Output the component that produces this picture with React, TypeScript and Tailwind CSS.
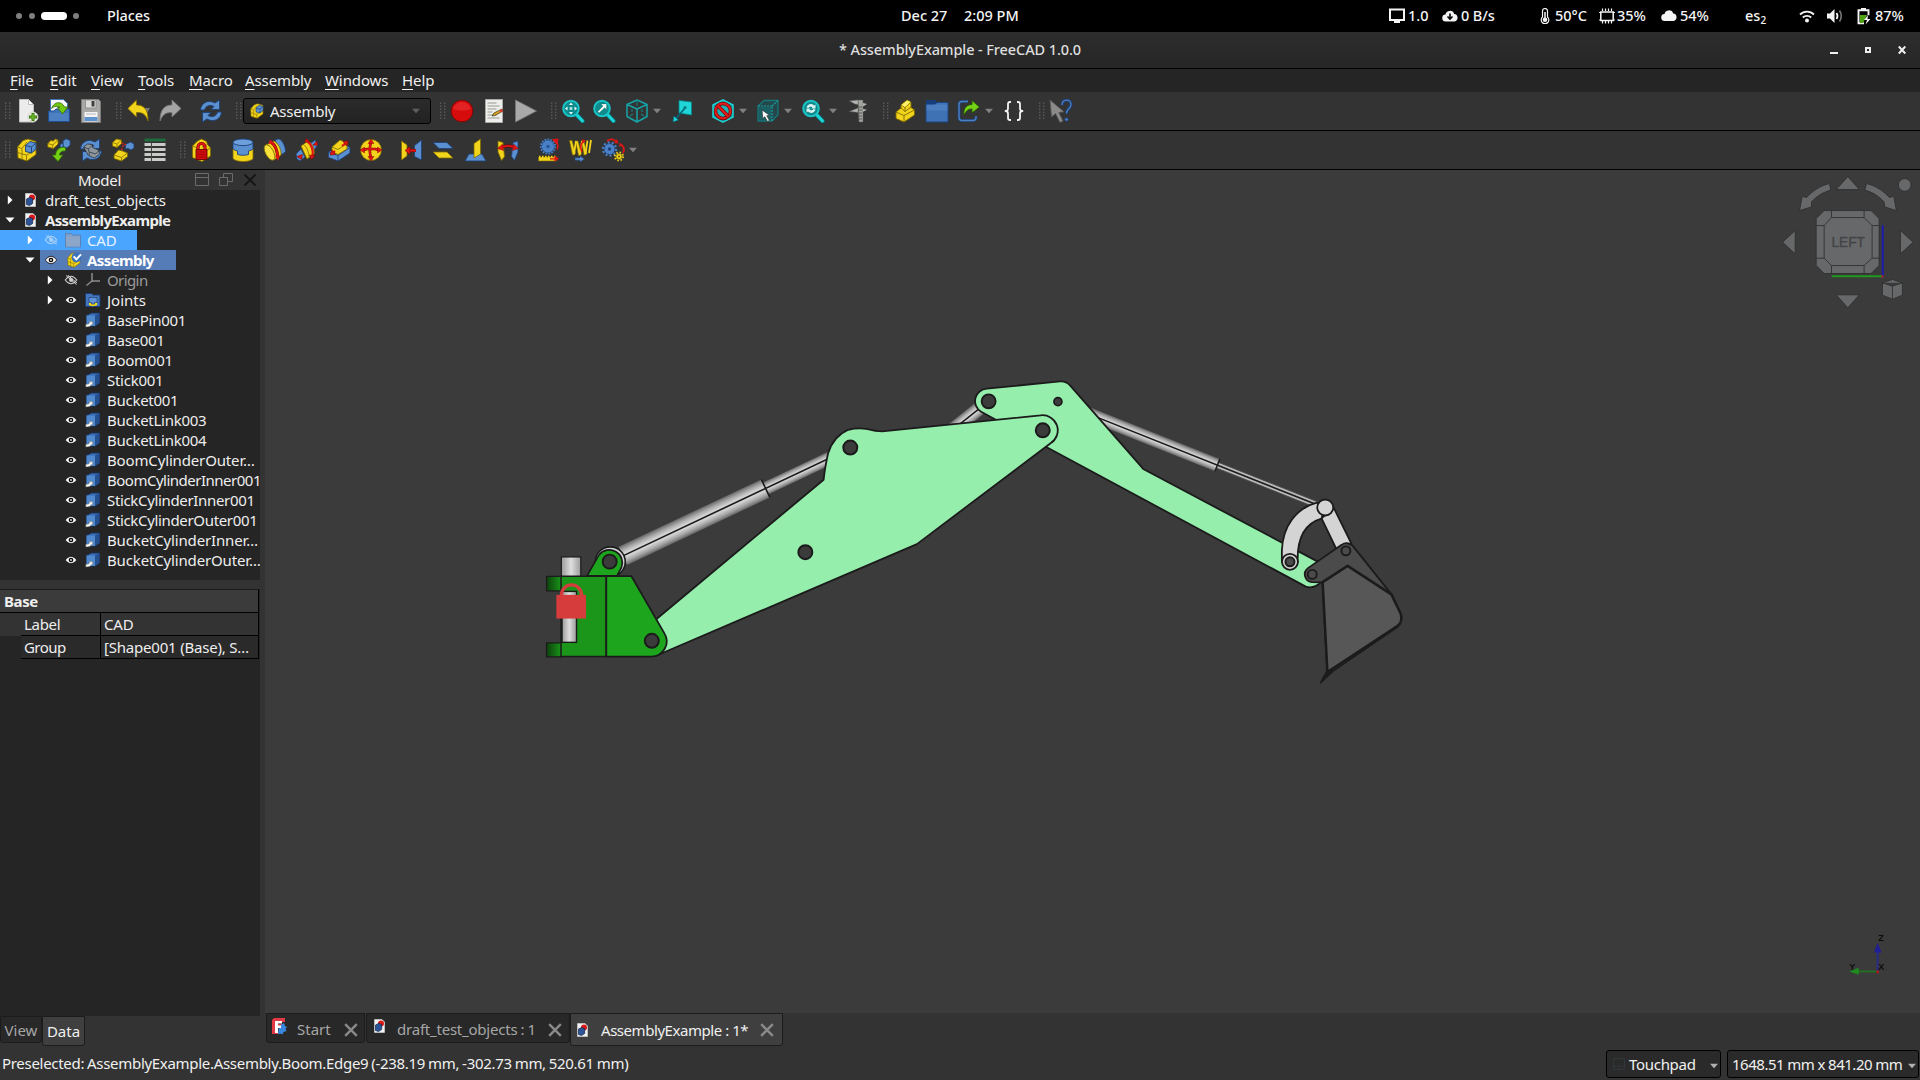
import React from "react";

type P = { className?: string };

/* ---------- generic pieces ---------- */

const Ic = ({ children, className = "" }: { children: React.ReactNode; className?: string }) => (
  <svg viewBox="0 0 24 24" className={`w-6 h-6 shrink-0 ${className}`} fill="none" strokeLinejoin="round">
    {children}
  </svg>
);

const Handle = ({ className = "" }: P) => (
  <svg viewBox="0 0 6 18" className={`w-[6px] h-[18px] shrink-0 ${className}`}>
    {[0, 3, 6, 9, 12, 15].map((y) => (
      <g key={y} fill="#5c5c5c">
        <rect x="0" y={y + 0.5} width="1.4" height="1.4" />
        <rect x="4" y={y + 0.5} width="1.4" height="1.4" />
      </g>
    ))}
  </svg>
);

const Arrow = ({ className = "", fill = "#808080" }: P & { fill?: string }) => (
  <svg viewBox="0 0 8 6" className={`w-2 h-1.5 shrink-0 ${className}`}>
    <path d="M0 .8h8L4 5.2z" fill={fill} />
  </svg>
);

const Y = "#f3d41c";
const YD = "#7d6a00";
const B = "#5a8fd0";
const BD = "#1c3f77";
const C = "#1fd5d8";
const R = "#d01010";

/* ---------- first toolbar icons ---------- */

const NewDoc = ({ className }: P) => (
  <Ic className={className}>
    <path d="M3.500.5h9l5 5v17.500h-14z" fill="#ececec" stroke="#bdbdbd" />
    <path d="M12.500.5l5 5h-5z" fill="#fff" stroke="#bdbdbd" />
    <circle cx="17" cy="18" r="5" fill="#eef5e8" stroke="#c8ccc4" strokeWidth=".8" />
    <path d="M17 14v8M13 18h8" stroke="#3a7a0c" strokeWidth="3" />
    <path d="M17 15v6M14 18h6" stroke="#73c12e" strokeWidth="1.200" />
  </Ic>
);
const OpenDoc = ({ className }: P) => (
  <Ic className={className}>
    <path d="M3.500.5h13l4 4V16h-17z" fill="#f4f4f4" stroke="#3f74b8" />
    <path d="M1.500 12H7l2-2h13.500v12.500h-21z" fill="#3f74b8" stroke="#1f4f90" />
    <path d="M2.500 14h19v8h-19z" fill="#5a8ccc" opacity=".5" />
    <path d="M4.500 9.500C7 2.500 14.500 1.500 17.500 8h3.500L15.500 15l-5-6.500H13c-2-2-6-1.500-8.500 1z" fill="#73c80f" stroke="#2f6a05" strokeWidth=".8" />
  </Ic>
);
const Save = ({ className }: P) => (
  <Ic className={className}>
    <path d="M2.500.5h17l2 2v21h-19z" fill="#a9aaa7" stroke="#7c7d7a" />
    <path d="M6.500 1h10.500v8H6.500z" fill="#dcdcda" stroke="#80817e" strokeWidth=".7" />
    <path d="M12.500 2h3v5.500h-3z" fill="#3f403e" />
    <path d="M5.500 13h13v9.500h-13z" fill="#f3f3f3" />
    <path d="M5.500 18h13v4h-13z" fill="#5f92cf" />
    <path d="M7 15h10" stroke="#bbb" />
  </Ic>
);
const Undo = ({ className }: P) => (
  <Ic className={className}>
    <path d="M15 9h8l-3.500 6z" fill="#7b7b7b" />
    <path d="M9.500 1v5c7 0 12 4 11.500 16-2.500-7-5-8.500-11.500-8.500V18L.8 9.500z" fill={Y} stroke={YD} strokeWidth=".8" />
  </Ic>
);
const Redo = ({ className }: P) => (
  <Ic className={className}>
    <path d="M14 1v5C7 6 2 10 2 22c3-7 5.500-8.500 12-8.500V18l9-8.500z" fill="#a4a4a4" stroke="#777" strokeWidth=".8" />
  </Ic>
);
const RefreshShape = () => (
  <>
    <path d="M1.500 11C2 4 9 0 16 4l4.500-3v9.500H12L15 7.500C10.500 5 6.500 7 5.500 11z" fill={B} stroke={BD} strokeWidth=".9" />
    <path d="M22.500 13C22 20 15 24 8 20l-4.500 3v-9.500H12L9 16.500c4.500 2.500 8.500.5 9.500-3.500z" fill={B} stroke={BD} strokeWidth=".9" />
  </>
);
const Refresh = ({ className }: P) => (
  <Ic className={className}>
    <RefreshShape />
  </Ic>
);
const AssemblyShape = () => (
  <>
    <path d="M2.500 9l5.500-6.500 5-1.500 8 2.500v13L12 23l-9-3z" fill={Y} stroke={YD} strokeWidth=".9" />
    <path d="M2.500 9l4.500 1.500v11M7 10.500L12 4M7 16l4.500 1 9.500-5M11.500 17v6M3 14.500l4 1.500" stroke={YD} strokeWidth=".8" />
    <path d="M10.500 7.500L15 3.500l6 1.500v6l-4.500 4-6-1.500z" fill={B} stroke={BD} strokeWidth=".9" />
    <path d="M10.500 7.500l6 1.500 4.500-4M16.500 9v6" stroke={BD} strokeWidth=".9" />
  </>
);
const AssemblyIc = ({ className }: P) => (
  <Ic className={className}>
    <AssemblyShape />
  </Ic>
);
const Record = ({ className }: P) => (
  <Ic className={className}>
    <circle cx="12" cy="12" r="10.800" fill="#d60c0c" stroke="#7e0000" strokeWidth=".8" />
    <path d="M3 10a9.300 9.300 0 0 1 18 0c-5 2-12 2-18 0z" fill="#f03a3a" opacity=".5" />
  </Ic>
);
const MacroEdit = ({ className }: P) => (
  <Ic className={className}>
    <path d="M3.500.5h17v23h-17z" fill="#eeeeea" stroke="#a8a8a8" />
    <path d="M5.500 4h9M5.500 7h12M5.500 10h9M5.500 13h5M5.500 16h9M5.500 19h12" stroke="#999" />
    <path d="M10 17l2-3 8-4 1 2-8 4.500z" fill="#e0a01c" stroke="#442" strokeWidth=".8" />
    <path d="M17.500 11.300l2.500-1.300 1 2-2.500 1.400z" fill="#d33" />
  </Ic>
);
const Play = ({ className }: P) => (
  <Ic className={className}>
    <path d="M1.500 1l21 11-21 11z" fill="#a9a9a9" stroke="#777" strokeWidth=".8" />
  </Ic>
);
const LensBase = () => (
  <>
    <path d="M15 15l6.500 7" stroke="#067a7c" strokeWidth="4.400" strokeLinecap="round" />
    <path d="M15 15l6.500 7" stroke={C} strokeWidth="2.800" strokeLinecap="round" />
    <circle cx="10" cy="9.500" r="7.800" fill="#0f8a8d" stroke="#19c3c6" strokeWidth="2" />
  </>
);
const ZoomFit = ({ className }: P) => (
  <Ic className={className}>
    <LensBase />
    <path d="M10 3.500l2 2.500H8zM10 15.500l2-2.500H8zM4 9.500l2.500-2v4zM16 9.500l-2.500-2v4z" fill="#e8fbfb" />
    <path d="M8.700 8.200h2.600v2.600H8.700z" fill="#bfeaea" />
  </Ic>
);
const ZoomSel = ({ className }: P) => (
  <Ic className={className}>
    <LensBase />
    <path d="M14.500 5v5.500l-1.800-1.800L7 14l-1.300-1.300L11 7 9 5z" fill="#fff" stroke="#064" strokeWidth=".3" />
  </Ic>
);
const IsoCube = ({ className }: P) => (
  <Ic className={className}>
    <path d="M12 1l10 4.500v12L12 23 2 17.500v-12zM2 5.500l10 4.500 10-4.500M12 10v13" stroke="#16a3a6" strokeWidth="1.500" />
    <path d="M12 1v6M5 17l3-2M19 17l-3-2M7 10v3M17 10v3" stroke="#138082" strokeWidth="1.100" />
  </Ic>
);
const AlignSel = ({ className }: P) => (
  <Ic className={className}>
    <path d="M8 1.500l12.500 1.500v13L8 14z" fill={C} stroke="#088" strokeWidth=".8" />
    <path d="M14 9L4.500 20" stroke="#067" strokeWidth="1.800" />
    <path d="M2 23l.8-6 4.700 4z" fill={C} stroke="#067" strokeWidth=".6" />
    <circle cx="14" cy="8.500" r="1.600" fill="#0b7f82" />
  </Ic>
);
const DrawStyle = ({ className }: P) => (
  <Ic className={className}>
    <path d="M12 .8l10 5v12.400l-10 5-10-5V5.800z" fill="#149a9c" stroke={C} strokeWidth="1.500" />
    <circle cx="12" cy="12" r="7.500" fill="#1fb0b2" stroke="#700" strokeWidth="3.400" />
    <circle cx="12" cy="12" r="7.500" stroke="#e51c1c" strokeWidth="2" />
    <path d="M6.800 6.800l10.400 10.400" stroke="#700" strokeWidth="3.400" />
    <path d="M6.800 6.800l10.400 10.400" stroke="#e51c1c" strokeWidth="2.200" />
  </Ic>
);
const BoxSelect = ({ className }: P) => (
  <Ic className={className}>
    <path d="M2 7l6-5.500h14v14L16 22H2z" fill="#23474a" stroke="#15777a" strokeWidth="1.300" />
    <path d="M3 8h12v13H3z" fill="#1a5f61" />
    <path d="M2 7h14v15M16 7l6-5.500" stroke="#1aa0a2" strokeWidth="1.200" strokeDasharray="2 1" />
    <path d="M6 11l.8 8.500 2-1.800 2.700 4.800 1.900-1.100-2.600-4.600 2.700-.5z" fill="#fff" stroke="#333" strokeWidth=".7" />
  </Ic>
);
const ZoomRefresh = ({ className }: P) => (
  <Ic className={className}>
    <LensBase />
    <path d="M5.500 8.500c1-3.500 5-4.500 7.500-2l1.500-1v4h-4l1-1.200c-1.500-1.200-3.200-.6-4 .7z" fill="#d8f2f2" />
    <path d="M14.500 10.500c-1 3.500-5 4.500-7.500 2l-1.500 1v-4h4l-1 1.200c1.500 1.200 3.200.6 4-.7z" fill="#d8f2f2" />
  </Ic>
);
const Caliper = ({ className }: P) => (
  <Ic className={className}>
    <path d="M12 1h5v22h-4z" fill="#a3a6a0" stroke="#555" strokeWidth=".5" />
    <path d="M3.500 2L12 1v4.500L9 5zM3.500 12.500L12 9v4.500L9 13z" fill="#b4b7b1" stroke="#666" strokeWidth=".5" />
    <path d="M17 4l4 1-4 2.500zM17 10l4 .8-4 2z" fill="#b4b7b1" />
    <path d="M13 8h3M13 11h3M13 14h3M13 17h3M13 20h3" stroke="#444" strokeWidth=".8" />
  </Ic>
);
const PartIc = ({ className }: P) => (
  <Ic className={className}>
    <path d="M3 13l5-4V6l6-5 4 2v5.500l3.500 2.500v5L11 23l-8-3.500z" fill={Y} stroke={YD} strokeWidth=".9" />
    <path d="M3 13l8 3.500V23M8 6l4 2.500L18 3M12 8.500v4l-4-3.500M12 12.500l4-3 2-1M11 16.500l10.500-5.500" stroke={YD} strokeWidth=".9" />
    <path d="M8.500 6L14 1.500l3.500 1.600L12 8z" fill="#fff06a" />
  </Ic>
);
const GroupIc = ({ className }: P) => (
  <Ic className={className}>
    <path d="M1 1h9l2 2.500v3H1z" fill="#153e7b" />
    <path d="M1 5h9l2-1.500h11V23H1z" fill="#3f72b5" stroke="#1c4684" />
    <path d="M1.500 5.500h21v6h-21z" fill="#5c8ccb" opacity=".45" />
    <path d="M1 1h9l2 2.500-2 1.700H1z" fill="#153e7b" />
  </Ic>
);
const LinkIc = ({ className }: P) => (
  <Ic className={className}>
    <path d="M11 2.500H5a3 3 0 0 0-3 3v13a3 3 0 0 0 3 3h11a3 3 0 0 0 3-3V17" stroke="#1d4176" strokeWidth="3" />
    <path d="M11 2.500H5a3 3 0 0 0-3 3v13a3 3 0 0 0 3 3h11a3 3 0 0 0 3-3V17" stroke="#4d7fbf" strokeWidth="1.400" />
    <path d="M7 16c-1-7 3-10.500 8-10.500V1.500L22.500 8 15 14v-4c-4 0-6 2-8 6z" fill="#73d216" stroke="#245205" strokeWidth=".9" />
  </Ic>
);
const Braces = ({ className }: P) => (
  <Ic className={className}>
    <path
      d="M9 3H8Q6 3 6 5V9.500Q6 12 3.500 12Q6 12 6 14.500V19Q6 21 8 21H9M15 3h1Q18 3 18 5V9.500Q18 12 20.500 12Q18 12 18 14.500V19Q18 21 16 21H15"
      stroke="#f2f2f2"
      strokeWidth="1.800"
    />
  </Ic>
);
const WhatsThis = ({ className }: P) => (
  <Ic className={className}>
    <path d="M13 6c0-6.500 9-6.500 9-.5 0 4-4.500 4-4.500 9" stroke="#1d3f74" strokeWidth="3.200" />
    <path d="M13 6c0-6.500 9-6.500 9-.5 0 4-4.500 4-4.500 9" stroke="#4a7cc0" strokeWidth="1.300" />
    <circle cx="17.500" cy="20.500" r="1.800" fill="#4a7cc0" stroke="#1d3f74" strokeWidth=".8" />
    <path d="M1 1l1.500 17 4-3.500 4.500 9 3-1.500-4.200-8.500 5.200-.7z" fill="#8b8b89" stroke="#555" strokeWidth=".9" />
  </Ic>
);

/* ---------- second toolbar icons ---------- */

const InsertIc = ({ className }: P) => (
  <Ic className={className}>
    <path d="M.8 5.500l3-3 2.500.5L8.500 1l2.500 1v4L6.500 10.500.8 9z" fill={Y} stroke={YD} strokeWidth=".8" />
    <path d="M.8 5.500l5 1.500 5-5M5.800 7v3.500" stroke={YD} strokeWidth=".8" />
    <path d="M16 3l3-2.200 4.200 1.700v4.500L20 10l-4-1.500z" fill={B} stroke={BD} strokeWidth=".8" />
    <path d="M13 6.500l3-1.500v4l-2.500 1.500z" fill={B} stroke={BD} strokeWidth=".8" />
    <path d="M18.500 9.500c-5-1-9.500 1.500-10 7.500H5l6 6.500 5-6.500h-3.500c0-2.500 2.500-4.500 6-4z" fill="#73d216" stroke="#2f6a05" strokeWidth=".8" />
  </Ic>
);
const SolveIc = ({ className }: P) => (
  <Ic className={className}>
    <RefreshShape />
    <path d="M4.500 9l4-3 5 .5v3l6 2.500 1 4-5 4-6-2.500z" fill="#8f979e" stroke="#2b3440" strokeWidth=".8" />
    <path d="M4.500 9l5 2 4-4M9.500 11l1 6M10.500 14l6 2 3.500-3.500" stroke="#2b3440" strokeWidth=".8" />
  </Ic>
);
const ExplodeIc = ({ className }: P) => (
  <Ic className={className}>
    <path d="M1.500 4.500l4-3.500 5 1v3.500l-4.500 4-4.500-1.500z" fill={Y} stroke={YD} strokeWidth=".8" />
    <path d="M1.500 4.500L6 6l4.500-4M6 6v3.500" stroke={YD} strokeWidth=".7" />
    <path d="M14.500 6.500l2-1 3-1.500 3.500 2v4l-3 2-3-1.500-2.500.5z" fill={B} stroke={BD} strokeWidth=".8" />
    <path d="M3 17l4.500-5 3.500.8 5.500 2.200v3.500L10.500 23 3 20.500z" fill={Y} stroke={YD} strokeWidth=".8" />
    <path d="M3 17l7.500 2.500 6-4.500M10.500 19.500V23" stroke={YD} strokeWidth=".8" />
    <path d="M10.500 5l4.500 2M10.500 12l2-5" stroke="#d22" strokeWidth="1.300" strokeDasharray="2 1" />
  </Ic>
);
const BomIc = ({ className }: P) => (
  <Ic className={className}>
    <path d="M1.500.5h21v3h-21z" fill="#1f6b3d" />
    <path d="M1.500 5h21v3h-21zM1.500 10h21v3h-21zM1.500 15h21v3h-21zM1.500 20h21v3h-21z" fill="#c9cbc9" />
    <path d="M8.500 4v20" stroke="#444" strokeWidth="1" />
  </Ic>
);
const GroundIc = ({ className }: P) => (
  <Ic className={className}>
    <path d="M3.500 8l5-5 4-2 5 2.500 1 3 3 3.500V18l-8.500 5.500-9.500-4z" fill={Y} stroke={YD} strokeWidth=".9" />
    <path d="M3.500 8l4.500 2M18.500 6.500L13 9M21.500 10l-4 2.500" stroke={YD} strokeWidth=".8" />
    <path d="M9 12V9a3.500 3.500 0 0 1 7 0v3" stroke="#7d0000" strokeWidth="3.200" />
    <path d="M9 12V9a3.500 3.500 0 0 1 7 0v3" stroke="#e01515" strokeWidth="2" />
    <path d="M7 11.500h11V21.500H7z" fill={R} stroke="#6b0000" strokeWidth=".9" />
    <path d="M8 14h9M8 16.500h9M8 19h9" stroke="#9e0000" strokeWidth=".8" />
  </Ic>
);
const FixedIc = ({ className }: P) => (
  <Ic className={className}>
    <path d="M2 11v9c0 2 5 3.500 10.300 3.500S22 22 22 20v-9z" fill={Y} stroke={YD} strokeWidth=".8" />
    <path d="M2 4.500v6c1 1.500 2.500 2 4.500 2.500v3.500c3 1 8 1 11 0V13c2-.5 3.500-1 4.500-2.500v-6z" fill={B} stroke={BD} strokeWidth=".9" />
    <ellipse cx="12" cy="4.300" rx="10" ry="3.300" fill="#6d9fdc" stroke={BD} strokeWidth=".9" />
  </Ic>
);
const RevoluteIc = ({ className }: P) => (
  <Ic className={className}>
    <path d="M12 2l4-1.200c4 2 6.500 8 6.500 13l-4 3z" fill={B} stroke={BD} strokeWidth=".8" />
    <path d="M3 7l8-4c4 2 7.500 8 7 14l-7 5z" fill={Y} stroke={YD} strokeWidth=".8" />
    <ellipse cx="6.500" cy="14.500" rx="4" ry="8.500" transform="rotate(-28 6.500 14.500)" fill="#f9e23c" stroke={YD} strokeWidth=".8" />
    <path d="M8 4c4 3 6.500 8 6.500 15" stroke="#7d0000" strokeWidth="3" />
    <path d="M8 4c4 3 6.500 8 6.500 15" stroke="#e01515" strokeWidth="2" />
    <path d="M5.500 6L7 1.500l4 3.500zM12 18l5-.5-2 5z" fill="#e01515" />
  </Ic>
);
const CylindricalIc = ({ className }: P) => (
  <Ic className={className}>
    <path d="M1 16l5-5 4 8-5 4-3-2zM15 6l5-4 3 5-5 6z" fill={B} stroke={BD} strokeWidth=".8" />
    <path d="M6 8l7-5c4 2 7 8 6 13l-7 5z" fill={Y} stroke={YD} strokeWidth=".8" />
    <path d="M8 6c4 3 6 8 6 13" stroke={YD} strokeWidth=".8" />
    <path d="M12 3c4 3 6.500 8 5.500 15" stroke="#e01515" strokeWidth="2.200" />
    <path d="M9.500 4l2-3.500 3 3.500zM14.500 17l5.500.5-3.500 4zM2 18.500l5.500-2-1 5zM18 7l4-4 .5 4.500z" fill="#e01515" stroke="#7d0000" strokeWidth=".5" />
  </Ic>
);
const SliderIc = ({ className }: P) => (
  <Ic className={className}>
    <path d="M1.500 14L15 7l8 2v6l-12 8-9.500-3.500z" fill={B} stroke={BD} strokeWidth=".8" />
    <path d="M1.500 14l9.500 3.500L23 9.500M11 17.500V23" stroke={BD} strokeWidth=".8" />
    <path d="M5 9l8-7 7 3v6l-9 5.500L5 14z" fill={Y} stroke={YD} strokeWidth=".8" />
    <path d="M5 9l6 2.500 9-6" stroke={YD} strokeWidth=".8" />
    <path d="M15 8l5-4M4 16l4-3" stroke="#e01515" strokeWidth="2.200" />
    <path d="M21.500 3l-5.500.5 3.500 4.500zM3 17l5.500-.5L5 12z" fill="#e01515" stroke="#7d0000" strokeWidth=".5" />
  </Ic>
);
const BallIc = ({ className }: P) => (
  <Ic className={className}>
    <circle cx="12" cy="12" r="10.500" fill={Y} stroke={YD} strokeWidth=".8" />
    <path d="M12 4c-1.500 5-1.500 11 0 16M4 12c5-1.500 11-1.500 16 0" stroke="#7d0000" strokeWidth="2.600" />
    <path d="M12 4c-1.500 5-1.500 11 0 16M4 12c5-1.500 11-1.500 16 0" stroke="#e01515" strokeWidth="1.800" />
    <path d="M12 1l3 4.500H9zM12 23l3-4.500H9zM1 12l4.500-3v6zM23 12l-4.500-3v6z" fill="#e01515" stroke="#7d0000" strokeWidth=".4" />
  </Ic>
);
const DistanceIc = ({ className }: P) => (
  <Ic className={className}>
    <path d="M2.500 3l5.500 4v11l-5.500 4z" fill={Y} stroke={YD} strokeWidth=".8" />
    <path d="M22.500 2l-7 5.500v11l7 3.500z" fill={B} stroke={BD} strokeWidth=".8" />
    <path d="M10 12.500h7" stroke="#7d0000" strokeWidth="3" />
    <path d="M10 12.500h7" stroke="#e01515" strokeWidth="2" />
    <path d="M6 12.500l5-4v8z" fill="#e01515" stroke="#7d0000" strokeWidth=".5" />
  </Ic>
);
const ParallelIc = ({ className }: P) => (
  <Ic className={className}>
    <path d="M2 4.500h14l6 6H8z" fill={B} stroke={BD} strokeWidth=".8" />
    <path d="M2 14h14l6 6H8z" fill={Y} stroke={YD} strokeWidth=".8" />
  </Ic>
);
const PerpIc = ({ className }: P) => (
  <Ic className={className}>
    <path d="M5 16h13l4 7H7l-6 0z" fill={B} stroke={BD} strokeWidth=".8" />
    <path d="M10 5.500l6.500-4.500v15l-6.500 4z" fill={Y} stroke={YD} strokeWidth=".8" />
  </Ic>
);
const AngleIc = ({ className }: P) => (
  <Ic className={className}>
    <path d="M2 3l5 1.500 1.500 14-3 4L2 14z" fill={Y} stroke={YD} strokeWidth=".8" />
    <path d="M22 3l-5 1.500-1.500 14 3 4L22 14z" fill={B} stroke={BD} strokeWidth=".8" />
    <path d="M5 9.500c4-2 10-2 14 0" stroke="#7d0000" strokeWidth="3" />
    <path d="M5 9.500c4-2 10-2 14 0" stroke="#e01515" strokeWidth="1.900" />
    <path d="M1.500 10.500l5-4.500 1 6.500zM22.500 10.500l-5-4.500-1 6.500z" fill="#e01515" stroke="#7d0000" strokeWidth=".4" />
  </Ic>
);
const RackIc = ({ className }: P) => (
  <Ic className={className}>
    <circle cx="12" cy="8.500" r="6.500" fill="#4a80c6" stroke={BD} strokeWidth=".8" />
    <circle cx="12" cy="8.500" r="7.200" stroke="#4a80c6" strokeWidth="1.800" strokeDasharray="1.700 1.316" />
    <circle cx="12" cy="8.500" r="1.800" fill="#2a569a" />
    <path d="M2.500 19h18v4h-18z" fill={Y} stroke={YD} strokeWidth=".6" />
    <path d="M3 18.800h17" stroke={Y} strokeWidth="2" strokeDasharray="1.500 1.500" />
    <path d="M19.500 2.500c2.500 2 3 6 1.500 9" stroke="#e01515" strokeWidth="1.600" />
    <path d="M17 1.500l5-.5-1.500 4.500zM14 20.800h5" stroke="#e01515" strokeWidth="1.200" fill="#e01515" />
    <path d="M23 20.800l-4.500-3.300v6.300z" fill="#e01515" />
  </Ic>
);
const ScrewIc = ({ className }: P) => (
  <Ic className={className}>
    <path d="M1.500 2.500h2.500l3.500 13-1.500 1.500h-1.500zM7.500 3h2.500l3.500 13-1.500 1.500h-1.500zM13.500 3h2.500l3 12.500-1.500 1.500h-1.500z" fill={Y} stroke={YD} strokeWidth=".7" />
    <path d="M8 3L6 16M14 3l-2 13M19.500 2.500L17.500 16M23 2l-2 13" stroke={Y} strokeWidth="1.800" />
    <path d="M15.500 3c-3 3-3.500 7-1.500 11" stroke="#e01515" strokeWidth="1.600" />
    <path d="M13.500 1.500l4 .5-2 3.500z" fill="#e01515" />
    <path d="M7 19.800h5v-1.800l4.500 3-4.500 3v-1.800H7z" fill={B} stroke={BD} strokeWidth=".6" />
  </Ic>
);
const GearsIc = ({ className }: P) => (
  <Ic className={className}>
    <circle cx="8.500" cy="11" r="5.500" fill="#4a80c6" stroke={BD} strokeWidth=".8" />
    <circle cx="8.500" cy="11" r="6.600" stroke="#4a80c6" strokeWidth="2.200" strokeDasharray="2 2.147" />
    <circle cx="8.500" cy="11" r="1.700" fill="#1c3f77" />
    <circle cx="18" cy="18.500" r="3" fill={Y} stroke={YD} strokeWidth=".7" />
    <circle cx="18" cy="18.500" r="4.100" stroke={Y} strokeWidth="1.800" strokeDasharray="1.500 1.720" />
    <circle cx="18" cy="18.500" r="1.100" fill="#6f5d00" />
    <path d="M6 3c3-2 6-2 8.500 0M20.500 7c2.500 2 3 5 1.500 8" stroke="#e01515" strokeWidth="1.800" />
    <path d="M13 5l4.500.5-1.500-4.500zM18 8.500l.8-4 3.200 3z" fill="#e01515" />
  </Ic>
);

/* ---------- tree icons ---------- */

const DocIc = ({ className = "" }: P) => (
  <svg viewBox="0 0 11 14" className={`w-[11px] h-[14px] shrink-0 ${className}`}>
    <path d="M.5.5h7.500l2.500 2.500v10.500H.5z" fill="#f2f2f2" stroke="#d8d8d8" strokeWidth=".6" />
    <circle cx="7" cy="4.500" r="3" fill="#dd1616" />
    <path d="M1.500 6l3-1.500 3.200 1v5L4.500 12.500l-3-1z" fill="#2c5496" stroke="#10284f" strokeWidth=".7" />
  </svg>
);
const Eye = ({ off, blue }: { off?: boolean; blue?: boolean }) => (
  <svg viewBox="0 0 14 10" className="w-3.5 h-2.5 shrink-0">
    <path
      d="M1.200 5Q4 1.200 7 1.200T12.800 5Q10 8.800 7 8.800T1.200 5z"
      fill={off ? "none" : "#f4f4f4"}
      stroke={blue ? "#a9d0f8" : off ? "#c8c8c8" : "#000"}
      strokeWidth={off ? 1.1 : 0.8}
    />
    <circle cx="7" cy="5" r={off ? 2 : 2.3} fill={off ? (blue ? "#a9d0f8" : "#c8c8c8") : "#0a0a0a"} />
    <circle cx="7" cy="5" r=".9" fill={off ? "none" : "#eee"} />
    {off && <path d="M2 .5l10.500 9M3.500 0l9.500 8" stroke={blue ? "#a9d0f8" : "#d5d5d5"} strokeWidth="1" />}
  </svg>
);
const BodyIc = () => (
  <svg viewBox="0 0 16 16" className="w-4 h-4 shrink-0">
    <path d="M1.500 3.500l5-2.500h8v10l-4.500 3H1.500z" fill="#3b6cb5" stroke="#16335f" strokeWidth=".9" />
    <path d="M1.500 3.500h8.500v10.500H1.500z" fill="#5088cd" />
    <path d="M10 3.500l4.500-2.500v10l-4.500 3z" fill="#24508f" />
    <path d="M.8 15v-2.800h1.200q2.200-.2 2.700-1.700l-1-.9h4v3.600l-1-.8q-1.500 2.600-5.900 2.600z" fill="#f4f4f0" stroke="#555" strokeWidth=".4" />
  </svg>
);
const FolderIc = () => (
  <svg viewBox="0 0 16 16" className="w-4 h-4 shrink-0">
    <path d="M.5 1.500h6l1.500 1.500h7.500v12H.5z" fill="#7c9fcb" stroke="#5d83b5" />
    <path d="M1 4.500h14v10H1z" fill="#8ba6c9" />
  </svg>
);
const AsmTreeIc = () => (
  <svg viewBox="0 0 24 24" className="w-4 h-4 shrink-0" fill="none">
    <AssemblyShape />
    <circle cx="16" cy="8" r="7.500" fill="#3d73bd" />
    <path d="M11.500 6.500l4 4.500L22.500 3.500" stroke="#fff" strokeWidth="3" />
  </svg>
);
const OriginIc = () => (
  <svg viewBox="0 0 16 16" className="w-4 h-4 shrink-0" fill="none" stroke="#8c8c8c" strokeWidth="1.500">
    <path d="M7 1v9M7 9h8M7 9l-5.500 4.500" />
  </svg>
);
const JointsIc = () => (
  <svg viewBox="0 0 16 16" className="w-4 h-4 shrink-0">
    <path d="M.5 1.500h6l1.500 1.500h7v11.500H.5z" fill="#4376bb" stroke="#183c73" />
    <path d="M4 9v4c1 1.500 7 1.500 8 0V9z" fill={Y} />
    <path d="M4 5.500v5h2.500v1.500h3v-1.500H12v-5z" fill="#5f93d6" stroke="#1c3f77" strokeWidth=".7" />
  </svg>
);

const Right = () => (
  <svg viewBox="0 0 6 10" className="w-1.5 h-2.5">
    <path d="M.8 .5l4.700 4.500-4.700 4.500z" fill="#fff" />
  </svg>
);
const Down = () => (
  <svg viewBox="0 0 10 6" className="w-2.5 h-1.5">
    <path d="M.5 .5h9L5 5.500z" fill="#fff" />
  </svg>
);

/* ---------- tree ---------- */

const Tree = () => (
  <div className="h-[390px] w-[260px] bg-[#252525] overflow-hidden text-[15px] leading-5 text-[#eee]">
    <div className="flex items-center h-5">
      <span className="w-[25px] pl-[7px]"><Right /></span>
      <DocIc />
      <span className="pl-[9px] tracking-[-0.2px]">draft_test_objects</span>
    </div>
    <div className="flex items-center h-5">
      <span className="w-[25px] pl-[5px]"><Down /></span>
      <DocIc />
      <span className="pl-[9px] font-bold tracking-[-0.65px]">AssemblyExample</span>
    </div>
    <div className="flex items-center h-5 w-[137px] bg-[#4aa5ff] text-[#e6f2ff]">
      <span className="w-11 pl-[27px]"><Right /></span>
      <Eye off blue />
      <span className="pl-[7px]"><FolderIc /></span>
      <span className="pl-1.5 tracking-[-0.2px]">CAD</span>
    </div>
    <div className="flex items-center h-5">
      <span className="w-10 pl-[25px]"><Down /></span>
      <div className="flex items-center h-5 w-[136px] bg-[#567cb8] pl-1">
        <Eye />
        <span className="pl-2"><AsmTreeIc /></span>
        <span className="pl-[5px] font-bold text-white tracking-[-0.6px]">Assembly</span>
      </div>
    </div>
    <div className="flex items-center h-5 text-[#9b9b9b]">
      <span className="w-16 pl-[47px]"><Right /></span>
      <Eye off />
      <span className="pl-[7px]"><OriginIc /></span>
      <span className="pl-1.5 tracking-[-0.6px]">Origin</span>
    </div>
    <div className="flex items-center h-5">
      <span className="w-16 pl-[47px]"><Right /></span>
      <Eye />
      <span className="pl-[7px]"><JointsIc /></span>
      <span className="pl-1.5">Joints</span>
    </div>
    {["BasePin001", "Base001", "Boom001", "Stick001", "Bucket001", "BucketLink003", "BucketLink004"].map((n) => (
      <div key={n} className="flex items-center h-5 pl-16">
        <Eye />
        <span className="pl-[7px]"><BodyIc /></span>
        <span className="pl-1.5 whitespace-nowrap tracking-[-0.27px]">{n}</span>
      </div>
    ))}
    {[
      "BoomCylinderOuter…", "BoomCylinderInner001", "StickCylinderInner001", "StickCylinderOuter001",
      "BucketCylinderInner…", "BucketCylinderOuter…",
    ].map((n) => (
      <div key={n} className="flex items-center h-5 pl-16">
        <Eye />
        <span className="pl-[7px]"><BodyIc /></span>
        <span
          className={`pl-1.5 whitespace-nowrap ${
            n.endsWith("…") ? "tracking-[-0.15px]" : n.startsWith("Boom") ? "tracking-[-0.5px]" : "tracking-[-0.34px]"
          }`}
        >
          {n}
        </span>
      </div>
    ))}
  </div>
);

const Props = () => (
  <div className="mt-[9px] h-[427px] w-[260px] bg-[#252525] text-[15px] text-[#eee] border-t border-[#1a1a1a]">
    <div className="w-[259px] border-r border-black">
      <div className="h-[23px] bg-[#3b3b3b] border-b border-black pl-1 font-bold leading-[22px] tracking-[-0.4px]">Base</div>
      <div className="flex h-[23px] leading-[22px]">
        <div className="w-[21px] bg-[#333]" />
        <div className="w-20 bg-[#333] border-b border-r border-black pl-[3px] tracking-[-0.3px]">Label</div>
        <div className="flex-1 bg-[#333] border-b border-black pl-[3px] tracking-[-0.2px]">CAD</div>
      </div>
      <div className="flex h-[23px] leading-[22px]">
        <div className="w-[21px] bg-[#252525]" />
        <div className="w-20 bg-[#2a2a2a] border-b border-r border-black pl-[3px] tracking-[-0.55px]">Group</div>
        <div className="flex-1 bg-[#2a2a2a] border-b border-black pl-[3px] tracking-[-0.2px]">[Shape001 (Base), S…</div>
      </div>
    </div>
  </div>
);

/* ---------- 3D view ---------- */

const E = "#1b1b1b";

const NavCube = () => (
  <g transform="translate(1760.700 165.300) scale(.33333)" fill="#67686a" stroke="#2c2c2c" strokeWidth="2.500" strokeLinejoin="round">
    <path d="M264 34l35 39h-70zM264 428l35-39h-70zM68 231l38-35v70zM460 231l-38-35v70z" />
    <circle cx="435" cy="59" r="19" />
    <path d="M209 55l4 20c-23 5-41 17-58 35l0 15-36 11 8-43 13 4c18-20 42-36 69-42z" />
    <path d="M320 55l-5 20c23 5 41 17 58 35l2 15 35 11-8-43-13 4c-18-20-42-36-69-42z" />
    <path d="M193 136h141l24 24v141l-24 24h-141l-24-24v-141z" />
    <path d="M215 157h98l24 24v98l-24 22h-98l-22-22v-98z" />
    <path d="M215 136v21M313 136v21M215 301v24M313 301v24M169 181h24M169 279h24M337 181h21M337 279h21" />
    <text x="215" y="245" fontFamily="Liberation Sans" fontSize="42" textLength="100" lengthAdjust="spacingAndGlyphs" fill="#434446" stroke="#434446" strokeWidth="1">LEFT</text>
    <path d="M369 180v153" stroke="#1c1cae" strokeWidth="6" />
    <path d="M216 333h152" stroke="#1d9a1d" strokeWidth="6" />
    <circle cx="368" cy="334" r="3.500" fill="#c02020" stroke="none" />
    <path d="M398 343l30 10v37l-30 12-30-12v-37zM368 353l30 10 30-10M398 363v38" />
  </g>
);

const Scene = () => (
  <svg viewBox="265 170 1655 844" className="w-[1655px] h-[844px] bg-[#3b3b3b]" fill="none">
    <defs>
      <linearGradient id="cyl" x1="0" y1="0" x2="0" y2="1">
        <stop offset="0" stopColor="#686868" /><stop offset=".2" stopColor="#a6a6a6" /><stop offset=".4" stopColor="#d2d2d2" /><stop offset=".6" stopColor="#d2d2d2" /><stop offset=".8" stopColor="#a6a6a6" /><stop offset="1" stopColor="#686868" />
      </linearGradient>
      <linearGradient id="pin" x1="0" y1="0" x2="1" y2="0">
        <stop offset="0" stopColor="#9a9a9a" /><stop offset=".5" stopColor="#dedede" /><stop offset="1" stopColor="#9a9a9a" />
      </linearGradient>
      <linearGradient id="grn" x1="0" y1="0" x2="1" y2="0">
        <stop offset="0" stopColor="#0d400d" /><stop offset="1" stopColor="#1a961a" />
      </linearGradient>
    </defs>

    <g transform="translate(0 .6)">
      {/* boom cylinder */}
      <g transform="translate(609.700 561.700) rotate(-25.300)">
        <rect x="170" y="-6.500" width="100" height="13" fill="url(#cyl)" />
        <rect x="14" y="-10" width="158" height="20" fill="url(#cyl)" />
        <path d="M14 0h256M172-10v20" stroke={E} strokeWidth="1.600" />
      </g>
      <circle cx="609.700" cy="561.700" r="15" fill="#d4d4d4" stroke={E} strokeWidth="1.600" />

      {/* stick cylinder */}
      <g transform="translate(988.300 401) rotate(141.500)">
        <rect x="0" y="-7" width="60" height="14" fill="url(#cyl)" />
        <path d="M0 0h60" stroke={E} strokeWidth="1.500" />
      </g>

      {/* bucket cylinder */}
      <g transform="translate(1057.700 401.300) rotate(21.700)">
        <rect x="168" y="-3" width="112" height="6" fill="#b9b9b9" />
        <path d="M168-3h112M168 3h112" stroke="#4a4a4a" strokeWidth=".8" />
        <rect x="0" y="-6.500" width="172" height="13" fill="url(#cyl)" />
        <path d="M0 0h280M172-6.500v13" stroke={E} strokeWidth="1.500" />
      </g>

      {/* stick */}
      <path
        d="M986.700 388.300L1060 381Q1066 380.500 1070 385L1143.300 468.700L1318 561.500A14 14 0 0 1 1306 586.500L1046.700 447L996.700 420L981 411.500A12.500 12.500 0 0 1 986.700 388.300z"
        fill="#95eeac" stroke={E} strokeWidth="1.800" strokeLinejoin="round"
      />
      <circle cx="988.500" cy="401" r="7" fill="#3b3b3b" stroke={E} strokeWidth="1.900" />
      <circle cx="1057.900" cy="401.300" r="4" fill="#3b3b3b" stroke={E} strokeWidth="1.700" />

      {/* boom */}
      <path
        d="M650 624L823.300 479.500Q824.500 468 827.700 453.300Q833 436 848 429.500Q856 427.500 866 428.500Q876 431 882 431L1040.500 415A15.200 15.200 0 0 1 1050.500 443L916.700 544L655 656z"
        fill="#95eeac" stroke={E} strokeWidth="1.800" strokeLinejoin="round"
      />
      {[[850, 447.3], [805, 552], [1042.7, 430]].map(([x, y]) => (
        <circle key={x} cx={x} cy={y} r="7" fill="#3b3b3b" stroke={E} strokeWidth="2" />
      ))}
    </g>

    {/* base */}
    <g transform="translate(-.6 .4)">
      <rect x="561.300" y="557" width="19.500" height="20" fill="url(#pin)" stroke={E} strokeWidth="1.200" />
      <path d="M587 576L599 555A13 13 0 0 1 621.500 567.500L617 576z" fill="#1da61d" stroke={E} strokeWidth="1.700" />
      <circle cx="609.700" cy="561.700" r="7" fill="#3b3b3b" stroke={E} strokeWidth="1.900" />
      <path d="M546.500 576.500h15v14.500h-15zM546.500 643h15v14h-15z" fill="url(#grn)" stroke={E} strokeWidth="1.200" />
      <path d="M561 576.300h45.300v80.500H561z" fill="#1b961b" stroke={E} strokeWidth="1.500" />
      <path d="M606.300 576.300h25.200L664.500 633.500A15.300 15.300 0 0 1 651.500 656.800h-45.200z" fill="#1da61d" stroke={E} strokeWidth="1.800" />
      <circle cx="651.900" cy="641" r="7" fill="#3b3b3b" stroke={E} strokeWidth="2" />
      <rect x="562" y="591.500" width="14.500" height="51" fill="url(#pin)" stroke={E} strokeWidth="1.400" />

      {/* ground lock */}
      <path d="M561.500 596V595a10 10 0 0 1 20 0v1" stroke="#d63c3c" strokeWidth="3.400" />
      <rect x="556.300" y="595" width="29.700" height="23.700" fill="#d63c3c" />
    </g>

    <g transform="translate(.2 .6)">
      {/* bucket links */}
      <path d="M1321.500 518L1337.500 551L1351.500 543.500L1334 508z" fill="#d4d4d4" stroke={E} strokeWidth="1.800" />
      <path
        d="M1281.900 561.700V550C1283 526 1296 508 1317 502.500L1325 507.300L1321.500 518.500C1306 523 1297 537 1297.700 561.700z"
        fill="#d4d4d4" stroke={E} strokeWidth="1.800"
      />
      <circle cx="1325.300" cy="507.300" r="8" fill="#d4d4d4" stroke={E} strokeWidth="1.800" />
      <circle cx="1290" cy="561.700" r="8" fill="#d4d4d4" stroke={E} strokeWidth="1.800" />
      <circle cx="1290" cy="561.700" r="4.500" fill="#4b4b4b" stroke={E} strokeWidth="2" />

      {/* bucket */}
      <path
        d="M1308 568L1341.700 544.700A8.500 8.500 0 0 1 1352.700 545.500L1391.700 594.300L1401 614Q1403 622 1397.500 627L1333 671L1320.700 682.700L1327.300 671L1322.700 582.300L1311.700 582A7.800 7.800 0 0 1 1308 568z"
        fill="#4b4b4b" stroke={E} strokeWidth="1.800" strokeLinejoin="round"
      />
      <path d="M1322.700 582L1347.700 565.700L1391.500 594.300L1401 614Q1403 622 1397.500 626L1327.500 672z" fill="#575757" stroke={E} strokeWidth="2.500" strokeLinejoin="round" />
      <path d="M1327 671l7-1.500-3 4-6 4z" fill={E} />
      <circle cx="1312.300" cy="574.300" r="4.500" fill="#4b4b4b" stroke={E} strokeWidth="1.900" />
      <circle cx="1346" cy="550.700" r="4.500" fill="#4b4b4b" stroke={E} strokeWidth="1.900" />
    </g>

    <NavCube />

    {/* axis cross */}
    <g transform="translate(.6 .4)">
      <path d="M1878 972v-20" stroke="#2a2a8c" strokeWidth="2" />
      <path d="M1878 943.500l3.800 9.500h-7.600z" fill="#1f1f96" />
      <path d="M1877 972h-20" stroke="#226e22" strokeWidth="2" />
      <path d="M1849.500 972l9.500-3.800v7.200z" fill="#1f8a1f" />
      <circle cx="1878" cy="972.500" r="1.600" fill="#a02020" />
      <g fill="#0c0c0c" fontFamily="Liberation Sans" fontSize="9" fontWeight="700">
        <text x="1878.500" y="942">Z</text>
        <text x="1849.500" y="971">Y</text>
        <text x="1878.500" y="971">X</text>
      </g>
    </g>
  </svg>
);

const TabX = ({ className = "" }: P) => (
  <svg viewBox="0 0 14 14" className={`w-3.5 h-3.5 shrink-0 ${className}`}>
    <path d="M1.200 1.200l11.600 11.600M12.800 1.200L1.200 12.800" stroke="#8a8a8a" strokeWidth="2.400" />
  </svg>
);

const Menu = ({ t, w }: { t: string; w: string }) => (
  <span className={`shrink-0 tracking-[-0.1px] ${w}`}>
    <span className="underline underline-offset-[3px]">{t[0]}</span>
    {t.slice(1)}
  </span>
);

export default function App() {
  return (
    <div className="w-[1920px] h-[1080px] overflow-hidden bg-[#333] font-['Noto_Sans',sans-serif] text-[15px] text-[#f0f0f0] flex flex-col whitespace-nowrap">
      {/* system bar */}
      <div className="h-8 bg-black flex items-center text-[14.5px] font-medium text-[#f4f4f4] shrink-0">
        <div className="flex items-center w-[107px] pl-4">
          <i className="size-1.5 rounded-full bg-[#808080]" />
          <i className="ml-[7px] size-1.5 rounded-full bg-[#808080]" />
          <i className="ml-1.5 w-[26px] h-2 rounded-full bg-white" />
          <i className="ml-1.5 size-1.5 rounded-full bg-[#808080]" />
        </div>
        <span className="w-[794px] tracking-[-0.1px]">Places</span>
        <span className="w-[63px]">Dec 27</span>
        <span className="w-[425px]">2:09 PM</span>
        <svg viewBox="0 0 16 16" className="w-4 h-4"><path d="M1 1.500h14v10.500H1z" fill="none" stroke="#f4f4f4" strokeWidth="2" /><path d="M5 13h6v2H5z" fill="#f4f4f4" /></svg>
        <span className="w-[37px] pl-[3px]">1.0</span>
        <svg viewBox="0 0 16 16" className="w-4 h-4"><path d="M4 13.500a3.500 3.500 0 0 1-.5-7 4.500 4.500 0 0 1 8.700-.5 3.800 3.800 0 0 1 .3 7.500z" fill="#f4f4f4" /><path d="M8 5.500v4M5.500 8.500L8 11l2.500-2.500" stroke="#000" strokeWidth="1.600" fill="none" /></svg>
        <span className="w-[79px] pl-[3px] tracking-[-0.1px]">0 B/s</span>
        <svg viewBox="0 0 16 16" className="w-4 h-4"><path d="M5.500 9V3a2.500 2.500 0 0 1 5 0v6a3.800 3.800 0 1 1-5 0z" fill="none" stroke="#f4f4f4" strokeWidth="1.200" /><circle cx="8" cy="11.800" r="2.300" fill="#f4f4f4" /><path d="M8 4v7" stroke="#f4f4f4" strokeWidth="1.500" /></svg>
        <span className="w-[46px] pl-[2px]">50°C</span>
        <svg viewBox="0 0 16 16" className="w-4 h-4" fill="none" stroke="#f4f4f4"><path d="M1.800 4h12.400v8.500H1.800z" strokeWidth="1.500" /><path d="M3.500 .5v2.500M6.500 .5v2.500M9.500 .5v2.500M12.500 .5v2.500M3.500 13v2.500M6.500 13v2.500M9.500 13v2.500M12.500 13v2.500M0 4.500h2M0 12h2M14 4.500h2M14 12h2" strokeWidth="1.200" /></svg>
        <span className="w-[46px] pl-[2px]">35%</span>
        <svg viewBox="0 0 16 16" className="w-4 h-4"><path d="M4 13a3.500 3.500 0 0 1-.5-7 4.500 4.500 0 0 1 8.700-.5 3.800 3.800 0 0 1 .3 7.500z" fill="#f4f4f4" /></svg>
        <span className="w-[68px] pl-[3px]">54%</span>
        <span className="w-[54px]">es<span className="text-[10px] relative top-[3px]">2</span></span>
        <svg viewBox="0 0 16 16" className="w-4 h-4" fill="none" stroke="#f4f4f4" strokeWidth="1.800"><path d="M1 6.500a10 10 0 0 1 14 0M3.800 9.500a6 6 0 0 1 8.400 0" /><circle cx="8" cy="12.500" r="2" fill="#f4f4f4" stroke="none" /></svg>
        <svg viewBox="0 0 16 16" className="ml-3 w-4 h-4" fill="none"><path d="M0 5.500h3L7.500 1v14L3 10.500H0z" fill="#f4f4f4" /><path d="M9.500 5q2 3 0 6" stroke="#f4f4f4" strokeWidth="1.800" /><path d="M12.500 2.500q3.500 5.500 0 11" stroke="#777" strokeWidth="1.600" /></svg>
        <svg viewBox="0 0 16 18" className="ml-[13px] w-4 h-[18px]" fill="none"><path d="M5 1h5v2H5z" fill="#f4f4f4" /><path d="M8 16.200H2.500v-13h10v5" stroke="#f4f4f4" strokeWidth="1.900" /><path d="M4 8h7l-4 8H4z" fill="#4ea311" /><path d="M12 8l-4 5h3l-1.500 4.500 5-5.500h-3z" fill="#f4f4f4" /></svg>
        <span className="pl-[3px]">87%</span>
      </div>

      {/* window title */}
      <div className="relative h-[37px] bg-gradient-to-b from-[#2d2d2d] to-[#262626] border-b border-black flex items-center shrink-0">
        <span className="flex-1 text-center font-medium text-[14.5px] text-[#dedede] tracking-[-0.1px]">* AssemblyExample - FreeCAD 1.0.0</span>
        <svg viewBox="1826 40 84 20" className="absolute left-[1826px] top-2 w-[84px] h-5" fill="none">
          <path d="M1830 52h8v2h-8z" fill="#eee" />
          <path d="M1866 48h4v4h-4z" stroke="#eee" strokeWidth="2" />
          <path d="M1898.800 46.500l6.500 7M1905.300 46.500l-6.500 7" stroke="#eee" strokeWidth="2" />
        </svg>
      </div>

      {/* menu bar */}
      <div className="h-[23px] bg-[#252525] flex items-center pl-2.5 shrink-0">
        <Menu t="File" w="w-10" />
        <Menu t="Edit" w="w-[41px]" />
        <Menu t="View" w="w-[47px]" />
        <Menu t="Tools" w="w-[51px]" />
        <Menu t="Macro" w="w-14" />
        <Menu t="Assembly" w="w-20" />
        <Menu t="Windows" w="w-[77px]" />
        <Menu t="Help" w="w-10" />
      </div>

      {/* toolbar 1 */}
      <div className="h-[39px] border-b border-black flex items-center shrink-0">
        <Handle className="ml-[5px]" />
        <NewDoc className="ml-[5px]" />
        <OpenDoc className="ml-[7px]" />
        <Save className="ml-2" />
        <Handle className="ml-[13px]" />
        <Undo className="ml-[5px]" />
        <Redo className="ml-[7px]" />
        <Refresh className="ml-[17px]" />
        <Handle className="ml-[13px]" />
        <div className="ml-px w-[188px] h-[26px] rounded-[3px] border border-black bg-gradient-to-b from-[#2b2b2b] to-[#222] flex items-center pl-[5px]">
          <AssemblyIc className="!w-4 !h-4" />
          <span className="pl-[5px] flex-1 tracking-[-0.25px]">Assembly</span>
          <Arrow className="mr-2.5" fill="#5e5e5e" />
        </div>
        <Handle className="ml-[9px]" />
        <Record className="ml-1" />
        <MacroEdit className="ml-2" />
        <Play className="ml-2" />
        <Handle className="ml-[13px]" />
        <ZoomFit className="ml-1" />
        <ZoomSel className="ml-[7px]" />
        <IsoCube className="ml-[9px]" />
        <Arrow className="ml-1" />
        <AlignSel className="ml-2.5" />
        <DrawStyle className="ml-4" />
        <Arrow className="ml-1" />
        <BoxSelect className="ml-[9px]" />
        <Arrow className="ml-1" />
        <ZoomRefresh className="ml-[9px]" />
        <Arrow className="ml-1" />
        <Caliper className="ml-[9px]" />
        <Handle className="ml-[13px]" />
        <PartIc className="ml-1" />
        <GroupIc className="ml-2" />
        <LinkIc className="ml-2" />
        <Arrow className="ml-1" />
        <Braces className="ml-[9px]" />
        <Handle className="ml-[13px]" />
        <WhatsThis className="ml-1" />
      </div>

      {/* toolbar 2 */}
      <div className="h-[39px] border-b border-black flex items-center shrink-0">
        <Handle className="ml-[5px]" />
        <AssemblyIc className="ml-1" />
        <InsertIc className="ml-2" />
        <SolveIc className="ml-2" />
        <ExplodeIc className="ml-2" />
        <BomIc className="ml-2" />
        <Handle className="ml-[13px]" />
        <GroundIc className="ml-[3px]" />
        <FixedIc className="ml-[18px]" />
        <RevoluteIc className="ml-2" />
        <CylindricalIc className="ml-2" />
        <SliderIc className="ml-2" />
        <BallIc className="ml-2" />
        <DistanceIc className="ml-4" />
        <ParallelIc className="ml-2" />
        <PerpIc className="ml-[9px]" />
        <AngleIc className="ml-2" />
        <RackIc className="ml-4" />
        <ScrewIc className="ml-2" />
        <GearsIc className="ml-[9px]" />
        <Arrow className="ml-1" />
      </div>

      {/* body */}
      <div className="flex h-[876px] shrink-0">
        <div className="w-[265px] flex flex-col">
          <div className="h-5 flex items-center">
            <span className="pl-[78px] w-[195px] tracking-[-0.2px]">Model</span>
            <svg viewBox="0 0 64 16" className="w-16 h-4" fill="none" stroke="#6c6c6c">
              <path d="M.5 1.500h13v12H.5zM.5 5.500h13" />
              <path d="M24.500 5.500h8v8h-8zM28.500 5.500v-4h9v8h-5" />
              <path d="M49.500 2.500l11 11M60.500 2.500l-11 11" stroke="#161616" strokeWidth="2" />
            </svg>
          </div>
          <Tree />
          <Props />
          <div className="flex items-start">
            <div className="w-[42px] h-[27px] bg-[#282828] border border-[#1c1c1c] rounded-b-[3px] text-[#a6a6a6] text-center leading-[26px]">View</div>
            <div className="w-[43px] h-[30px] bg-[#3f3f3f] border border-[#1c1c1c] rounded-b-[3px] text-center leading-[28px]">Data</div>
          </div>
        </div>
        <div className="flex flex-col">
          <Scene />
          <div className="flex items-start">
            <div className="ml-px w-[99px] h-[30px] bg-[#282828] border border-[#1c1c1c] rounded-b-[3px] text-[#a6a6a6] flex items-center pl-1">
              <svg viewBox="0 0 16 18" className="w-4 h-[18px] -mt-0.5">
                <path d="M3 0h11v4H7v2h5v4H7v6H1V2z" fill="#e23a44" />
                <path d="M8 8l5-3 1 3 2 1-1.500 2 1 2-3 1-1 2.500-2.500-1-2 1z" fill="#3a87e0" />
                <path d="M4 3h7v2.500H7v2h3V10H7v5H4z" fill="#fff" />
              </svg>
              <span className="pl-[10px] w-[57px] pt-0.5">Start</span>
              <TabX className="mt-[3px]" />
            </div>
            <div className="ml-px w-[204px] h-[30px] bg-[#282828] border border-[#1c1c1c] rounded-b-[3px] text-[#a6a6a6] flex items-center pl-[7px]">
              <DocIc className="-mt-1" />
              <span className="pl-3 w-[163px] pt-0.5 tracking-[-0.22px] [word-spacing:-0.5px]">draft_test_objects : 1</span>
              <TabX className="mt-[3px]" />
            </div>
            <div className="w-[213px] h-[33px] bg-[#3f3f3f] border border-[#1c1c1c] rounded-b-[3px] flex items-center pl-1.5">
              <DocIc />
              <span className="pl-[13px] w-[172px] pt-px tracking-[-0.45px]">AssemblyExample : 1*</span>
              <TabX className="mt-px" />
            </div>
          </div>
        </div>
      </div>

      {/* status bar */}
      <div className="flex-1 flex items-center">
        <span className="pl-0.5 flex-1 tracking-[-0.3px] [word-spacing:-0.7px]">Preselected: AssemblyExample.Assembly.Boom.Edge9 (-238.19 mm, -302.73 mm, 520.61 mm)</span>
        <div className="w-[115px] h-[28px] mt-0.5 rounded-[3px] border border-black bg-[#2a2a2a] flex items-center pl-1.5">
          <svg viewBox="0 0 12 12" className="w-3 h-3" fill="none" stroke="#30373b"><path d="M.5.5h11v11H.5zM.5 8h11M6 8v3.500" /></svg>
          <span className="pl-1 flex-1 tracking-[-0.3px]">Touchpad</span>
          <Arrow className="mr-0.5 mt-1" fill="#b0b0b0" />
        </div>
        <div className="ml-1.5 mr-px w-[192px] h-[28px] mt-0.5 rounded-[3px] border border-black bg-[#2a2a2a] flex items-center pl-1">
          <span className="flex-1 tracking-[-0.48px] [word-spacing:-0.3px]">1648.51 mm x 841.20 mm</span>
          <Arrow className="mr-0.5 mt-1" fill="#b0b0b0" />
        </div>
      </div>
    </div>
  );
}
